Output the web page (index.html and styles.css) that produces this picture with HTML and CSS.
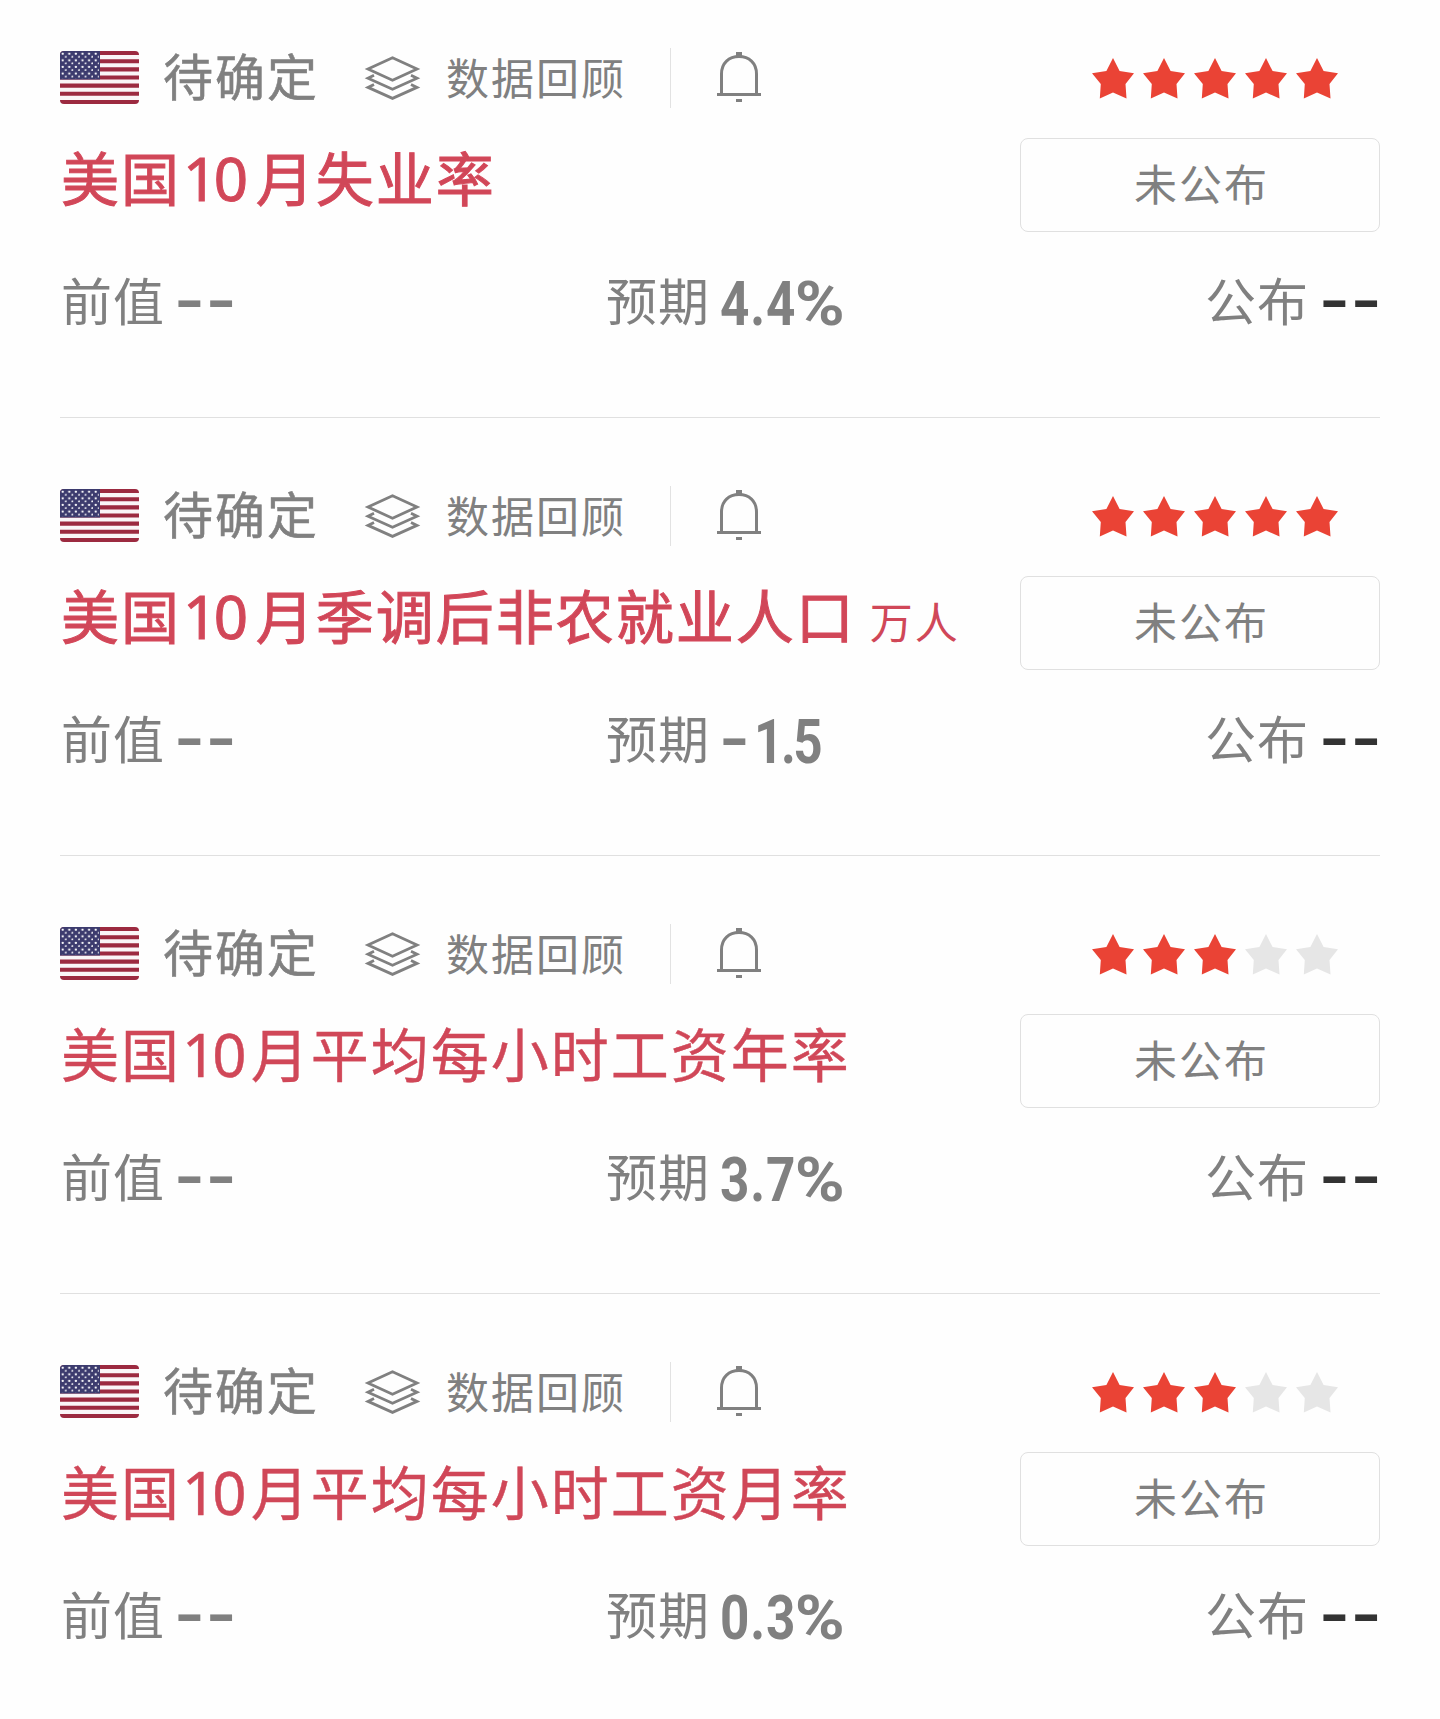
FILE: index.html
```html
<!DOCTYPE html>
<html lang="zh-CN">
<head>
  <meta charset="UTF-8" />
  <title>财经日历</title>
  <link rel="stylesheet" href="styles.css">
</head>
<body>

<!-- 图标 -->
<svg class="sprite" width="0" height="0">
  <defs>
    <pattern id="dots" width="6.6" height="6.6" patternUnits="userSpaceOnUse">
      <circle cx="2.7" cy="2.7" r="1.15" fill="#fff" />
      <circle cx="6" cy="6" r="1.15" fill="#fff" />
    </pattern>
    <clipPath id="flagClip"><rect width="79" height="53" rx="4" /></clipPath>
    <symbol id="flag" viewBox="0 0 79 53">
      <g clip-path="url(#flagClip)">
        <rect width="79" height="53" fill="#faf5f7" />
        <path d="M0 2.04H79M0 10.19H79M0 18.35H79M0 26.5H79M0 34.65H79M0 42.81H79M0 50.96H79" stroke="#9c2a40" stroke-width="4.08" />
        <rect width="40" height="28.5" fill="#3c3b6e" />
        <rect width="39" height="28" fill="url(#dots)" />
      </g>
    </symbol>
    <symbol id="layers" viewBox="0 0 56 44">
      <g fill="none" stroke="#808080" stroke-width="2.8">
        <path d="M28 1.8L52.5 13L28 24.2L3.5 13Z" />
        <path d="M9.5 19.3L3.5 22.2L28 33.2L52.5 22.2L46.5 19.3" />
        <path d="M9.5 28.5L3.5 31.4L28 42.4L52.5 31.4L46.5 28.5" />
      </g>
    </symbol>
    <symbol id="bell" viewBox="0 0 44 52">
      <path d="M4.5 42V22C4.5 11 12 4.5 22 4.5S39.5 11 39.5 22V42" fill="none" stroke="#808080" stroke-width="3" />
      <path d="M0 41H44V44H0ZM19 0H25V4H19ZM19 47H25V50H19Z" fill="#808080" />
    </symbol>
    <symbol id="star" viewBox="0 0 42 41">
      <path d="M21 0L27.6 13.1L42 15.2L33.5 26L34.5 40.5L21 34.5L7.8 40.5L8.8 26L0 15.2L14.4 13.1Z" />
    </symbol>
  </defs>
</svg>

<main class="list">

  <section class="card">
    <div class="head">
      <svg class="flag"><use href="#flag" /></svg>
      <span class="time">待确定</span>
      <svg class="layers"><use href="#layers" /></svg>
      <span class="review">数据回顾</span>
      <span class="divider"></span>
      <svg class="bell"><use href="#bell" /></svg>
      <div class="stars">
        <svg class="star"><use href="#star" /></svg>
        <svg class="star"><use href="#star" /></svg>
        <svg class="star"><use href="#star" /></svg>
        <svg class="star"><use href="#star" /></svg>
        <svg class="star"><use href="#star" /></svg>
      </div>
    </div>
    <div class="main">
      <h2 class="title strong">美国<span class="num">10</span>月失业率</h2>
      <div class="status">未公布</div>
    </div>
    <div class="stats">
      <div class="stat">前值<b class="dash">--</b></div>
      <div class="stat">预期<b class="value">4.4<span class="percent">%</span></b></div>
      <div class="stat">公布<b class="dash dark">--</b></div>
    </div>
  </section>

  <section class="card">
    <div class="head">
      <svg class="flag"><use href="#flag" /></svg>
      <span class="time">待确定</span>
      <svg class="layers"><use href="#layers" /></svg>
      <span class="review">数据回顾</span>
      <span class="divider"></span>
      <svg class="bell"><use href="#bell" /></svg>
      <div class="stars">
        <svg class="star"><use href="#star" /></svg>
        <svg class="star"><use href="#star" /></svg>
        <svg class="star"><use href="#star" /></svg>
        <svg class="star"><use href="#star" /></svg>
        <svg class="star"><use href="#star" /></svg>
      </div>
    </div>
    <div class="main">
      <h2 class="title strong">美国<span class="num">10</span>月季调后非农就业人口<small class="unit">万人</small></h2>
      <div class="status">未公布</div>
    </div>
    <div class="stats">
      <div class="stat">前值<b class="dash">--</b></div>
      <div class="stat">预期<b class="dash">-</b><b class="value after-minus">1.5</b></div>
      <div class="stat">公布<b class="dash dark">--</b></div>
    </div>
  </section>

  <section class="card">
    <div class="head">
      <svg class="flag"><use href="#flag" /></svg>
      <span class="time">待确定</span>
      <svg class="layers"><use href="#layers" /></svg>
      <span class="review">数据回顾</span>
      <span class="divider"></span>
      <svg class="bell"><use href="#bell" /></svg>
      <div class="stars">
        <svg class="star"><use href="#star" /></svg>
        <svg class="star"><use href="#star" /></svg>
        <svg class="star"><use href="#star" /></svg>
        <svg class="star off"><use href="#star" /></svg>
        <svg class="star off"><use href="#star" /></svg>
      </div>
    </div>
    <div class="main">
      <h2 class="title">美国<span class="num">10</span>月平均每小时工资年率</h2>
      <div class="status">未公布</div>
    </div>
    <div class="stats">
      <div class="stat">前值<b class="dash">--</b></div>
      <div class="stat">预期<b class="value">3.7<span class="percent">%</span></b></div>
      <div class="stat">公布<b class="dash dark">--</b></div>
    </div>
  </section>

  <section class="card">
    <div class="head">
      <svg class="flag"><use href="#flag" /></svg>
      <span class="time">待确定</span>
      <svg class="layers"><use href="#layers" /></svg>
      <span class="review">数据回顾</span>
      <span class="divider"></span>
      <svg class="bell"><use href="#bell" /></svg>
      <div class="stars">
        <svg class="star"><use href="#star" /></svg>
        <svg class="star"><use href="#star" /></svg>
        <svg class="star"><use href="#star" /></svg>
        <svg class="star off"><use href="#star" /></svg>
        <svg class="star off"><use href="#star" /></svg>
      </div>
    </div>
    <div class="main">
      <h2 class="title">美国<span class="num">10</span>月平均每小时工资月率</h2>
      <div class="status">未公布</div>
    </div>
    <div class="stats">
      <div class="stat">前值<b class="dash">--</b></div>
      <div class="stat">预期<b class="value">0.3<span class="percent">%</span></b></div>
      <div class="stat">公布<b class="dash dark">--</b></div>
    </div>
  </section>

</main>

</body>
</html>
```
FILE: styles.css
```css
* { box-sizing: border-box; }
body { margin: 0; background: #fefefe; color: #808080; font-family: "Noto Sans CJK SC", sans-serif; }
svg { display: block; flex: none; }
.sprite { position: absolute; }
.list { height: 1719px; padding: 0 60px; overflow: hidden; }

.card { height: 438px; padding-top: 68px; border-bottom: 1px solid #e0e0e0; white-space: nowrap; }
.card:first-child { height: 418px; padding-top: 48px; }
.card:last-child { border-bottom: 0; }

.head { display: flex; align-items: center; height: 60px; }
.flag { width: 79px; height: 53px; margin-bottom: 1px; }
.time { margin-left: 24px; width: 177px; padding-bottom: 9px; font-size: 50px; line-height: 60px; letter-spacing: 2px; -webkit-text-stroke: 0.5px #808080; }
.layers { width: 57px; height: 44px; margin-left: 24px; }
.review { width: 200px; margin-left: 25px; padding-bottom: 4px; font-size: 43px; line-height: 60px; letter-spacing: 2px; }
.divider { width: 1px; height: 60px; margin-left: 24px; background: #e2e2e2; }
.bell { width: 44px; height: 52px; margin-left: 46px; margin-bottom: 1px; }
.stars { display: flex; gap: 9px; margin-left: auto; margin-right: 42px; }
.star { width: 42px; height: 41px; fill: #ea4335; }
.star.off { fill: #e6e6e6; }

.main { display: flex; justify-content: space-between; height: 94px; margin-top: 30px; }
.title { margin: 0; padding-left: 1px; font-size: 58px; font-weight: 400; line-height: 76px; letter-spacing: 2px; color: #d04758; -webkit-text-stroke: 0.4px #d04758; }
.title.strong { -webkit-text-stroke: 1px #d5475a; }
.num { margin: 0 8px 0 1px; font-family: "Noto Sans", sans-serif; font-size: 60px; letter-spacing: -4px; }
.strong .num { margin: 0 11px 0 2px; letter-spacing: -3.5px; }
.unit { margin-left: 14px; font-size: 43px; -webkit-text-stroke: 0; }
.status { width: 360px; height: 94px; border: 1px solid #e0e0e0; border-radius: 8px; padding-left: 3px; font-size: 43px; line-height: 87px; letter-spacing: 2px; text-align: center; }

.stats { display: grid; grid-template-columns: 545px 599px 1fr; height: 60px; margin-top: 37px; padding-left: 1px; }
.stat { display: flex; font-size: 51px; line-height: 60px; letter-spacing: 1px; }
.value { margin: 5px 0 0 10px; font-family: Roboto, sans-serif; font-size: 61px; font-weight: 700; letter-spacing: 1px; transform: scaleX(0.84); transform-origin: left; }
.percent { display: inline-block; margin-left: -2px; transform: scaleX(1.32); transform-origin: left; }
.dash { margin: 3px 0 0 9px; font-family: Roboto, sans-serif; font-size: 60px; font-weight: 700; letter-spacing: 0.5px; transform: scaleX(1.32); transform-origin: left; }
.dark { color: #333; margin-left: 10px; }
.after-minus { margin-left: 11px; letter-spacing: -3px; }
```
